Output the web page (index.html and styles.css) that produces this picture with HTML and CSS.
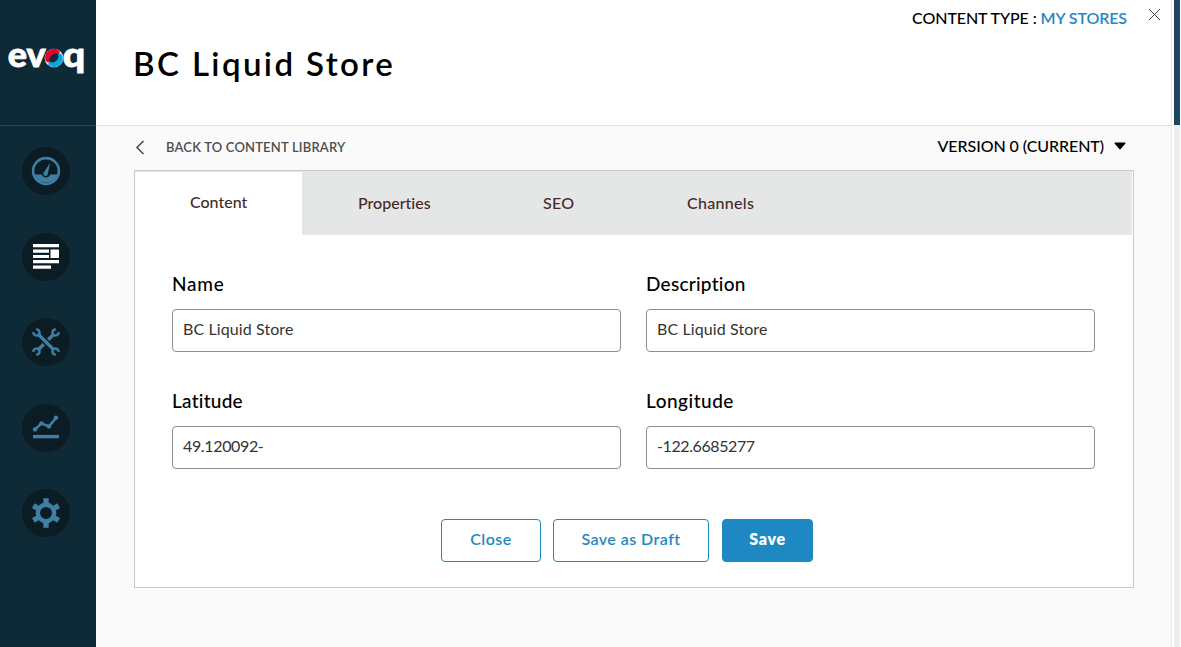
FILE: index.html
```html
<!DOCTYPE html>
<html lang="en">
<head>
<meta charset="utf-8">
<title>BC Liquid Store</title>
<link rel="stylesheet" href="styles.css">
</head>
<body>
<div class="app">
  <aside class="sidebar">
    <div class="brand">
      <svg width="78" height="32" viewBox="7 44 78 32">
        <text class="logo-text" x="7.8" y="67.4" textLength="38" lengthAdjust="spacingAndGlyphs">ev</text>
        <text class="logo-text" x="62.8" y="67.4" textLength="22.500" lengthAdjust="spacingAndGlyphs">q</text>
        <circle cx="54" cy="58" r="9.300" fill="#fff"/>
        <path d="M45.500 60.500A8.900 8.900 0 0 1 59.500 50.900Q60.500 53 58 54.500L50 62Q47 63.500 45.500 60.500Z" fill="#e8002f"/>
        <path d="M62.500 55.500A8.900 8.900 0 0 1 48.500 65.100Q47.500 63 50 61.500L58 54Q61 52.500 62.500 55.500Z" fill="#0ba3e2"/>
        <ellipse cx="54" cy="58" rx="5.400" ry="3.600" transform="rotate(-45 54 58)" fill="#0e2a36"/>
      </svg>
    </div>
    <nav class="nav">
      <a class="nav-item"><svg width="30" height="30" viewBox="0 0 30 30"><circle cx="15" cy="15" r="12.900" fill="none" stroke="#3f7fa4" stroke-width="2.600"/><path d="M3 18.500H10.800A4.500 4.500 0 0 0 19.200 18.500H27A13 13 0 0 1 3 18.500Z" fill="#3f7fa4"/><path d="M19.200 6.800L16.900 17.500A2.300 2.300 0 1 1 13.200 15.800Z" fill="#3f7fa4"/></svg></a>
      <a class="nav-item"><svg width="30" height="30" viewBox="0 0 30 30" fill="#fff"><path d="M2 2h26v3.300H2zM2 7.500h16v3.300H2zM19.500 7.500H28v8.500h-8.500zM2 13h16v3.100H2zM2 18h26v3.300H2zM2 23.500h18v3.200H2z"/></svg></a>
      <a class="nav-item"><svg width="30" height="30" viewBox="0 0 30 30"><g fill="none" stroke="#3f7fa4" stroke-width="2.500"><path d="M8 8L22 22" stroke-width="3.200"/><path d="M22 8L17.200 12.800M12.800 17.200L8 22" stroke-width="3.400"/><path d="M5.200 2.400A3.100 3.100 0 1 1 2.400 5.200M24.800 2.400A3.100 3.100 0 1 0 27.600 5.200M24.800 27.600A3.100 3.100 0 1 1 27.600 24.800M5.200 27.600A3.100 3.100 0 1 0 2.400 24.800"/></g></svg></a>
      <a class="nav-item"><svg width="30" height="30" viewBox="0 0 30 30"><path d="M4 16.400L10.500 10.400L18 13.400L25 5" fill="none" stroke="#3f7fa4" stroke-width="2.600"/><g fill="#3f7fa4"><circle cx="4" cy="16.400" r="2.200"/><circle cx="10.500" cy="10.400" r="2.200"/><circle cx="18" cy="13.400" r="2.200"/><circle cx="25" cy="4.800" r="2.200"/><path d="M2 21.900h26v3.400H2z"/></g></svg></a>
      <a class="nav-item"><svg width="30" height="30" viewBox="0 0 30 30"><circle cx="15" cy="15" r="8.200" fill="none" stroke="#3f7fa4" stroke-width="4.400"/><path d="M15 .3V6M15 24V29.700M2.300 7.700L7.200 10.500M22.800 19.500L27.700 22.300M2.300 22.300L7.200 19.500M22.800 10.500L27.700 7.700" stroke="#3f7fa4" stroke-width="5.400"/></svg></a>
    </nav>
  </aside>
  <main class="main">
    <header class="header">
      <h1 class="title">BC Liquid Store</h1>
      <div class="type"><span class="type-label">CONTENT TYPE :</span><a class="type-link">MY STORES</a></div>
      <svg class="close" width="13" height="13" viewBox="0 0 13 13"><path d="M1 1L12 12M12 1L1 12" stroke="#444" stroke-width="1"/></svg>
    </header>
    <div class="toolbar">
      <svg width="10" height="16" viewBox="0 0 10 16"><path d="M8.500 1L2 7.500L8.500 14" fill="none" stroke="#4b4e4f" stroke-width="1.600"/></svg>
      <span class="back">BACK TO CONTENT LIBRARY</span>
      <span class="version">VERSION 0 (CURRENT)</span>
      <svg class="caret" width="12" height="8" viewBox="0 0 12 8"><path d="M.8 .5H11.200Q12 .8 11.400 1.500L6.700 7Q6 7.700 5.300 7L.6 1.500Q0 .8 .8 .5Z"/></svg>
    </div>
    <section class="card">
      <div class="tabs">
        <div class="tab active">Content</div>
        <div class="tab properties">Properties</div>
        <div class="tab seo">SEO</div>
        <div class="tab channels">Channels</div>
      </div>
      <div class="form">
        <div class="field"><div class="label l-name">Name</div><div class="input">BC Liquid Store</div></div>
        <div class="field"><div class="label l-desc">Description</div><div class="input">BC Liquid Store</div></div>
        <div class="field"><div class="label l-lat">Latitude</div><div class="input num-lat">49.120092-</div></div>
        <div class="field"><div class="label l-long">Longitude</div><div class="input num-long">-122.6685277</div></div>
      </div>
      <div class="actions">
        <div class="btn btn-close">Close</div>
        <div class="btn btn-draft">Save as Draft</div>
        <div class="btn btn-save">Save</div>
      </div>
    </section>
  </main>
  <div class="rail"></div>
</div>
</body>
</html>
```
FILE: styles.css
```css
* { box-sizing: border-box; }
body { margin: 0; font-family: Lato, "Open Sans", sans-serif; font-variant-ligatures: none; color: #000; font-size: 16px; background: #fff; }
.app { display: flex; width: 1181px; height: 647px; overflow: hidden; }
.sidebar { width: 96px; background: #0e2a36; flex: none; }
.brand { height: 126px; padding: 44px 0 0 7px; border-bottom: 1px solid #24485c; }
.brand svg { display: block; overflow: visible; }
.logo-text { font: 900 35px Lato, sans-serif; fill: #fff; stroke: #fff; stroke-width: .8; }
.nav { display: flex; flex-direction: column; align-items: center; gap: 37.5px; padding: 21px 4px 0 0; }
.nav-item { width: 48px; height: 48px; border-radius: 50%; background: #0c1c24; display: flex; align-items: center; justify-content: center; }
.main { width: 1076px; flex: none; background: #fafafa; border-right: 1px solid #e6e6e6; }
.header { height: 126px; display: flex; background: #fff; border-bottom: 1px solid #e3e4e4; padding-left: 37px; }
.title { margin: 43px 0 0; font-size: 33px; line-height: 40px; font-weight: 600; letter-spacing: 2.4px; white-space: nowrap; }
.type { margin-left: auto; padding-top: 8px; line-height: 20px; font-weight: 500; white-space: nowrap; display: flex; gap: 4px; }
.type-label { letter-spacing: -.08px; }
.type-link { color: #1e88c3; font-weight: 600; letter-spacing: -.1px; }
.close { margin: 8px 10px 0 21px; flex: none; }
.toolbar { height: 44px; display: flex; align-items: center; padding: 0 45px 0 39px; white-space: nowrap; }
.toolbar svg { flex: none; }
.caret { margin-bottom: 4px; }
.back { margin: 0 0 2px 21px; font-size: 13px; font-weight: 600; color: #4b4e4f; letter-spacing: .18px; }
.version { margin: 0 10px 5px auto; font-weight: 500; letter-spacing: -.07px; }
.card { width: 1000px; height: 418px; margin-left: 38px; border: 1px solid #c8c9c9; background: #fff; }
.tabs { display: flex; height: 64px; background: #e5e7e6; margin-right: 1px; line-height: 64px; color: #46292b; font-weight: 500; white-space: nowrap; }
.tab.active { width: 167px; background: #fff; padding-left: 55px; border-top: 1px solid #e5e7e6; line-height: 60px; }
.properties { width: 185px; padding-left: 56px; }
.seo { width: 144px; padding-left: 56px; letter-spacing: .3px; }
.channels { padding-left: 56px; letter-spacing: .3px; }
.form { display: grid; grid-template-columns: 449px 449px; column-gap: 25px; row-gap: 31px; padding: 31px 37px 0; }
.field { height: 86px; }
.label { font-size: 19px; line-height: 36px; font-weight: 500; height: 43px; }
.l-name { letter-spacing: .8px; }
.l-desc { letter-spacing: .25px; }
.l-lat { letter-spacing: .25px; }
.l-long { letter-spacing: .5px; }
.input { height: 43px; border: 1px solid #8e8f90; border-radius: 4px; padding-left: 10px; line-height: 38px; color: #333; font-size: 16px; font-weight: 400; letter-spacing: .1px; }
.num-lat { letter-spacing: -.35px; }
.num-long { letter-spacing: -.4px; }
.actions { display: flex; padding: 50px 0 0 306px; }
.btn { height: 43px; border: 1px solid #1e88c3; border-radius: 4px; text-align: center; line-height: 38px; font-weight: 600; color: #1e88c3; white-space: nowrap; }
.btn-close { width: 100px; margin-right: 12px; letter-spacing: .5px; }
.btn-draft { width: 156px; margin-right: 13px; letter-spacing: .45px; }
.btn-save { width: 91px; background: #1e88c3; color: #fff; font-weight: 800; letter-spacing: .7px; }
.rail { width: 6px; margin-left: 2px; height: 647px; flex: none; background: linear-gradient(#1c475e 125px, #eee 125px); }
```
